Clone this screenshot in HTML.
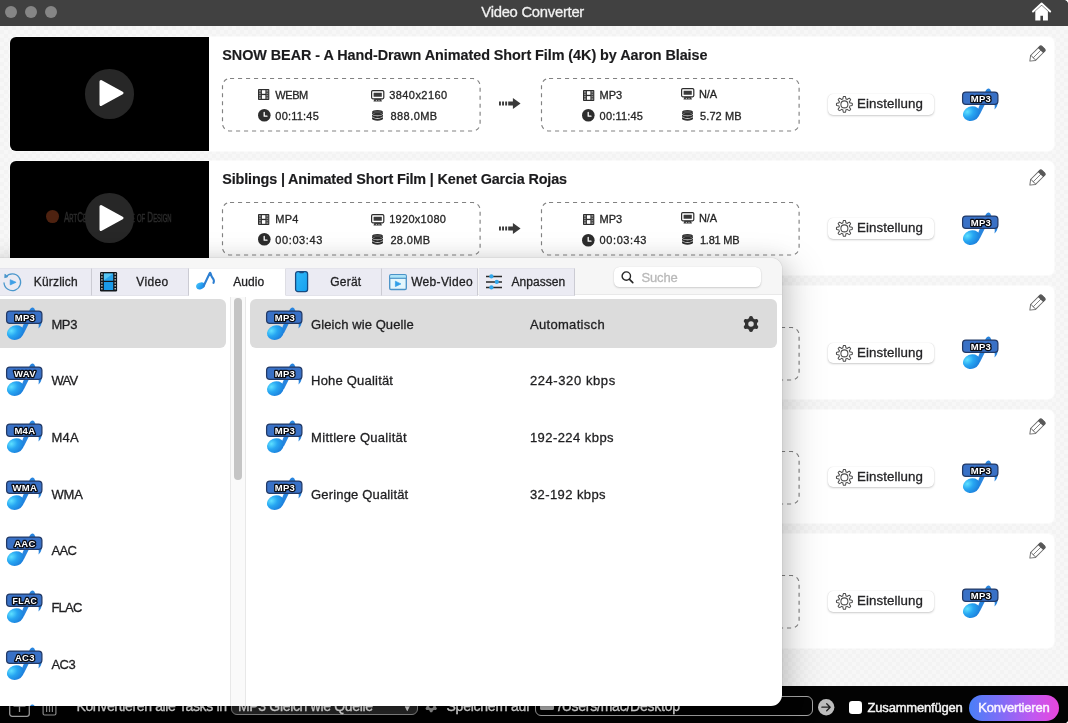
<!DOCTYPE html>
<html lang="de">
<head>
<meta charset="utf-8">
<title>Video Converter</title>
<style>
*{box-sizing:border-box;margin:0;padding:0}
html,body{width:1068px;height:723px;overflow:hidden;background:#f7f7f7}
body{position:relative;font-family:"Liberation Sans",sans-serif;color:#1d1d1f;-webkit-font-smoothing:antialiased}
#w{position:absolute;left:0;top:0;width:1068px;height:723px;will-change:transform}
.t{position:absolute;white-space:nowrap;line-height:1;-webkit-text-stroke:.3px}
svg{position:absolute;overflow:visible}
#tb{position:absolute;left:0;top:0;width:1068px;height:26.300px;background:#414141}
.tl{position:absolute;top:6px;width:12px;height:12px;border-radius:50%;background:#868686}
#main{position:absolute;left:0;top:26.300px;width:1068px;height:660px;background-color:#f7f7f7;
 background-image:linear-gradient(45deg,rgba(0,0,0,.016) 25%,transparent 25%,transparent 75%,rgba(0,0,0,.016) 75%),linear-gradient(45deg,rgba(0,0,0,.016) 25%,transparent 25%,transparent 75%,rgba(0,0,0,.016) 75%);background-size:8px 8px;background-position:0 0,4px 4px}
.card{position:absolute;left:10px;width:1044px;height:113.5px;background:#fff;border-radius:6px;box-shadow:0 0 0 1px rgba(255,255,255,.5)}
.thumb{position:absolute;left:0;top:0;width:199px;height:113.5px;background:#000;border-radius:6px 0 0 6px;overflow:hidden}
.play{position:absolute;left:74.500px;top:32.100px;width:49.800px;height:49.800px;border-radius:50%;background:#272727}

.i{font-size:11px;color:#262626}
.set{position:absolute;left:817.5px;top:57px;width:106.5px;height:20.5px;border-radius:5px;background:#fff;
 box-shadow:0 1px 2.2px rgba(0,0,0,.20),0 0 1px rgba(0,0,0,.14)}
#bot{position:absolute;left:0;top:686px;width:1068px;height:37px;background:#030303}
#pop{position:absolute;left:-12px;top:258.400px;width:794.300px;height:447.400px;background:#fff;border-radius:11px;
 box-shadow:0 0 1px rgba(0,0,0,.35),0 4px 24px rgba(0,0,0,.18),16px 4px 34px rgba(0,0,0,.10)}
#popin{position:absolute;left:0;top:0;width:100%;height:100%;border-radius:11px;overflow:hidden}
.tab{position:absolute;top:10px;height:27px;background:#ebebf3;border-right:1px solid #cbcbd3;border-top:1px solid #e4e4ec;border-bottom:1px solid #e3e3ea}
.tab.on{background:#fff;border-right-color:#dedee4;border-bottom-color:#fff;border-top-color:#f2f2f4}
.lbl{font-size:13px;color:#1f1f21}
</style>
</head>
<body>
<div id="w">
<div id="tb">
<div class="tl" style="left:5px"></div>
<div class="tl" style="left:25px"></div>
<div class="tl" style="left:45px"></div>
<div class="t" style="left:481.30px;top:5.07px;font-size:14.8px;letter-spacing:-0.261px;color:#f1f1f1;">Video Converter</div>
<svg style="left:1031.9px;top:1.9px" width="19.2" height="19" viewBox="0 0 19.2 19" ><path d="M1 9.500 9.600 1.500 18.200 9.500" fill="none" stroke="#fff" stroke-width="1.9" stroke-linecap="round" stroke-linejoin="round"/><path d="M3.300 9.300 9.600 3.600 15.900 9.300V18.500H11V13.800H8.400V18.500H3.300z" fill="#fff"/></svg>
</div>
<div id="main"></div>
<div class="card" style="top:37.00px"><div class="thumb">
<div class="play"></div>
<svg style="left:89.400px;top:42.300px" width="25" height="28" viewBox="0 0 25 28"><path d="M2 2.500 23 14 2 25.500z" fill="#fff" stroke="#fff" stroke-width="3" stroke-linejoin="round"/></svg>
</div></div>
<div class="t" style="left:222.30px;top:47.91px;font-size:14.4px;letter-spacing:-0.056px;color:#1b1b1d;font-weight:bold;-webkit-text-stroke:.15px;">SNOW BEAR - A Hand-Drawn Animated Short Film (4K) by Aaron Blaise</div>
<svg style="left:222.2px;top:78.00px" width="258.6" height="53.5"><rect x=".5" y=".5" width="257.600" height="52.500" rx="7.500" fill="none" stroke="#828282" stroke-width="1.150" stroke-dasharray="4.100 3.900"/></svg>
<svg style="left:540.6px;top:78.00px" width="258.6" height="53.5"><rect x=".5" y=".5" width="257.600" height="52.500" rx="7.500" fill="none" stroke="#828282" stroke-width="1.150" stroke-dasharray="4.100 3.900"/></svg>
<svg style="left:258.4px;top:89.35px" width="11.3" height="11" viewBox="0 0 11.3 11" ><rect x="0" y="0" width="11.300" height="11" rx=".8" fill="#2d2d2d"/><rect x="1" y="1" width="1.900" height="9" fill="#8a8a8a"/><rect x="8.400" y="1" width="1.900" height="9" fill="#8a8a8a"/><path d="M1 3.250H2.900M1 5.500H2.900M1 7.750H2.900M8.400 3.250H10.300M8.400 5.500H10.300M8.400 7.750H10.300" stroke="#2d2d2d" stroke-width=".8"/><rect x="3.900" y="1.200" width="3.500" height="3.600" fill="#fff"/><rect x="3.900" y="6.100" width="3.500" height="3.700" fill="#fff"/></svg>
<div class="t i" style="left:275.30px;top:89.79px;font-size:11px;letter-spacing:-0.411px;">WEBM</div>
<svg style="left:257.9px;top:109.2px" width="12.6" height="12.6" viewBox="0 0 12.6 12.6" ><circle cx="6.300" cy="6.300" r="6.300" fill="#2d2d2d"/><path d="M6.200 3.400V7.200H9" stroke="#fff" stroke-width="1.300" fill="none" stroke-linecap="round" stroke-linejoin="round"/></svg>
<div class="t i" style="left:275.30px;top:110.79px;font-size:11px;letter-spacing:0.212px;">00:11:45</div>
<svg style="left:370.8px;top:89.8px" width="13.4" height="11.6" viewBox="0 0 13.4 11.6" ><rect x=".6" y=".6" width="12.200" height="8.200" rx="1.200" fill="#fff" stroke="#2d2d2d" stroke-width="1.200"/><rect x="2.600" y="2.700" width="8.200" height="4" rx=".3" fill="#3a3a3a"/><path d="M3.400 8.800h6.600l.9 2.700H2.500z" fill="#3a3a3a"/><path d="M5.400 10v.9M8 10v.9" stroke="#f2f2f2" stroke-width=".8"/></svg>
<div class="t i" style="left:389.20px;top:89.79px;font-size:11px;letter-spacing:0.443px;">3840x2160</div>
<svg style="left:371.7px;top:109.9px" width="11" height="10.7" viewBox="0 0 11 10.7" ><ellipse cx="5.500" cy="2" rx="5.500" ry="2" fill="#2d2d2d"/><path d="M0 2v1.5a5.500 2 0 0 0 11 0v-1.5a5.500 2 0 0 1 -11 0zM0 4.2v1.8a5.500 2 0 0 0 11 0v-1.8a5.500 2 0 0 1 -11 0zM0 6.7v2a5.500 2 0 0 0 11 0v-2a5.500 2 0 0 1 -11 0z" fill="#2d2d2d"/><ellipse cx="5.500" cy="1.900" rx="4" ry="1.100" fill="#4a4a4a"/></svg>
<div class="t i" style="left:390.40px;top:110.79px;font-size:11px;letter-spacing:0.461px;">888.0MB</div>
<svg style="left:499px;top:98.4px" width="21.6" height="11.1" viewBox="0 0 21.6 11.1" ><path d="M0 3.600h1.900v3.900H0zM3.100 3.600h1.900v3.900H3.100zM6.200 3.600h1.900v3.900H6.200z" fill="#3a3a3a"/><path d="M9.200 3.600h4.700V0l7.700 5.550-7.700 5.550V7.500H9.200z" fill="#3a3a3a"/></svg>
<svg style="left:583px;top:89.6px" width="11.3" height="11" viewBox="0 0 11.3 11" ><rect x="0" y="0" width="11.300" height="11" rx=".8" fill="#2d2d2d"/><rect x="1" y="1" width="1.900" height="9" fill="#8a8a8a"/><rect x="8.400" y="1" width="1.900" height="9" fill="#8a8a8a"/><path d="M1 3.250H2.900M1 5.500H2.900M1 7.750H2.900M8.400 3.250H10.300M8.400 5.500H10.300M8.400 7.750H10.300" stroke="#2d2d2d" stroke-width=".8"/><rect x="3.900" y="1.200" width="3.500" height="3.600" fill="#fff"/><rect x="3.900" y="6.100" width="3.500" height="3.700" fill="#fff"/></svg>
<div class="t i" style="left:599.60px;top:89.79px;font-size:11px;letter-spacing:-0.012px;">MP3</div>
<svg style="left:582.2px;top:109.3px" width="12.6" height="12.6" viewBox="0 0 12.6 12.6" ><circle cx="6.300" cy="6.300" r="6.300" fill="#2d2d2d"/><path d="M6.200 3.400V7.200H9" stroke="#fff" stroke-width="1.300" fill="none" stroke-linecap="round" stroke-linejoin="round"/></svg>
<div class="t i" style="left:599.60px;top:110.79px;font-size:11px;letter-spacing:0.198px;">00:11:45</div>
<svg style="left:681.2px;top:88.0px" width="13.4" height="11.6" viewBox="0 0 13.4 11.6" ><rect x=".6" y=".6" width="12.200" height="8.200" rx="1.200" fill="#fff" stroke="#2d2d2d" stroke-width="1.200"/><rect x="2.600" y="2.700" width="8.200" height="4" rx=".3" fill="#3a3a3a"/><path d="M3.400 8.800h6.600l.9 2.700H2.500z" fill="#3a3a3a"/><path d="M5.400 10v.9M8 10v.9" stroke="#f2f2f2" stroke-width=".8"/></svg>
<div class="t i" style="left:699.00px;top:88.59px;font-size:11px;letter-spacing:-0.172px;">N/A</div>
<svg style="left:682px;top:109.9px" width="11" height="10.7" viewBox="0 0 11 10.7" ><ellipse cx="5.500" cy="2" rx="5.500" ry="2" fill="#2d2d2d"/><path d="M0 2v1.5a5.500 2 0 0 0 11 0v-1.5a5.500 2 0 0 1 -11 0zM0 4.2v1.8a5.500 2 0 0 0 11 0v-1.8a5.500 2 0 0 1 -11 0zM0 6.7v2a5.500 2 0 0 0 11 0v-2a5.500 2 0 0 1 -11 0z" fill="#2d2d2d"/><ellipse cx="5.500" cy="1.900" rx="4" ry="1.100" fill="#4a4a4a"/></svg>
<div class="t i" style="left:700.00px;top:110.79px;font-size:11px;letter-spacing:0.105px;">5.72 MB</div>
<div class="set" style="left:827.6px;top:94.10px"></div>
<svg style="left:836.1px;top:96.0px" width="16.8" height="16.8" viewBox="0 0 16.8 16.8" ><path d="M8.40 0.45L8.71 0.46L9.02 0.47L9.33 0.51L9.56 1.09L9.73 1.73L9.85 2.38L9.93 2.96L10.15 3.03L10.36 3.10L10.56 3.18L10.77 3.27L10.97 3.37L11.16 3.47L11.64 3.12L12.18 2.75L12.75 2.41L13.32 2.16L13.56 2.35L13.80 2.56L14.02 2.78L14.24 3.00L14.45 3.24L14.64 3.48L14.39 4.05L14.05 4.62L13.68 5.16L13.33 5.64L13.43 5.83L13.53 6.03L13.62 6.24L13.70 6.44L13.77 6.65L13.84 6.87L14.42 6.95L15.07 7.07L15.71 7.24L16.29 7.47L16.33 7.78L16.34 8.09L16.35 8.40L16.34 8.71L16.33 9.02L16.29 9.33L15.71 9.56L15.07 9.73L14.42 9.85L13.84 9.93L13.77 10.15L13.70 10.36L13.62 10.56L13.53 10.77L13.43 10.97L13.33 11.16L13.68 11.64L14.05 12.18L14.39 12.75L14.64 13.32L14.45 13.56L14.24 13.80L14.02 14.02L13.80 14.24L13.56 14.45L13.32 14.64L12.75 14.39L12.18 14.05L11.64 13.68L11.16 13.33L10.97 13.43L10.77 13.53L10.56 13.62L10.36 13.70L10.15 13.77L9.93 13.84L9.85 14.42L9.73 15.07L9.56 15.71L9.33 16.29L9.02 16.33L8.71 16.34L8.40 16.35L8.09 16.34L7.78 16.33L7.47 16.29L7.24 15.71L7.07 15.07L6.95 14.42L6.87 13.84L6.65 13.77L6.44 13.70L6.24 13.62L6.03 13.53L5.83 13.43L5.64 13.33L5.16 13.68L4.62 14.05L4.05 14.39L3.48 14.64L3.24 14.45L3.00 14.24L2.78 14.02L2.56 13.80L2.35 13.56L2.16 13.32L2.41 12.75L2.75 12.18L3.12 11.64L3.47 11.16L3.37 10.97L3.27 10.77L3.18 10.56L3.10 10.36L3.03 10.15L2.96 9.93L2.38 9.85L1.73 9.73L1.09 9.56L0.51 9.33L0.47 9.02L0.46 8.71L0.45 8.40L0.46 8.09L0.47 7.78L0.51 7.47L1.09 7.24L1.73 7.07L2.38 6.95L2.96 6.87L3.03 6.65L3.10 6.44L3.18 6.24L3.27 6.03L3.37 5.83L3.47 5.64L3.12 5.16L2.75 4.62L2.41 4.05L2.16 3.48L2.35 3.24L2.56 3.00L2.78 2.78L3.00 2.56L3.24 2.35L3.48 2.16L4.05 2.41L4.62 2.75L5.16 3.12L5.64 3.47L5.83 3.37L6.03 3.27L6.24 3.18L6.44 3.10L6.65 3.03L6.87 2.96L6.95 2.38L7.07 1.73L7.24 1.09L7.47 0.51L7.78 0.47L8.09 0.46Z" fill="none" stroke="#4c4c4c" stroke-width="1.050" stroke-linejoin="round"/><circle cx="8.400" cy="8.400" r="3.500" fill="none" stroke="#4c4c4c" stroke-width="1.050"/></svg>
<div class="t" style="left:857.00px;top:97.04px;font-size:13.3px;letter-spacing:0.094px;color:#252527;">Einstellung</div>
<svg style="left:959.75px;top:86.65px" width="40" height="36" viewBox="0 0 40 36" ><defs><radialGradient id="ng1" cx=".32" cy=".28" r=".8"><stop offset="0" stop-color="#5ee0ff"/><stop offset=".45" stop-color="#27a6f2"/><stop offset="1" stop-color="#1b7cda"/></radialGradient></defs><path d="M25.900 3.200Q28.100 .3 30.500 2.700C31 6.500 37.600 9 37.700 15C37.700 19 36.200 21 34.400 22.500C35 20 35.200 17.500 33 15.200C31 13 29 12.500 27.600 12L19.800 27.500 16.800 25z" fill="#2985de"/><ellipse cx="11.400" cy="26.600" rx="8.600" ry="7.200" transform="rotate(-22 11.400 26.600)" fill="url(#ng1)"/><rect x="2.600" y="5" width="35.300" height="12.400" rx="3.300" fill="#3971c6" stroke="#233a66" stroke-width="1.250"/><text x="20.900" y="14.850" text-anchor="middle" font-family="Liberation Sans,sans-serif" font-weight="bold" font-size="9.5" fill="#fff" stroke="#0b0e16" stroke-width="2.700" stroke-linejoin="round" paint-order="stroke" letter-spacing="0.3">MP3</text></svg>
<svg style="left:1029.3px;top:45.2px" width="17" height="17" viewBox="0 0 17 17" ><g transform="rotate(45 8.500 8.500)"><path d="M5 3.600h7v11.200L8.500 19.300 5 14.800z" fill="#fff" stroke="#6a6a6a" stroke-width=".95" stroke-linejoin="round"/><path d="M5 14.800Q6.700 13.600 8.500 14.800Q10.300 13.600 12 14.800M8.500 3.600v11.200" stroke="#6a6a6a" stroke-width=".8" fill="none"/><path d="M5 3.600V1.600Q5 .2 6.500 .2H10.500Q12 .2 12 1.600V3.600z" fill="#585858" stroke="#585858" stroke-width=".95" stroke-linejoin="round"/></g></svg>
<div class="card" style="top:161.26px"><div class="thumb">
<div style="position:absolute;left:36px;top:48.400px;width:13.400px;height:13.200px;border-radius:50%;background:#4e2210;filter:blur(.4px)"></div>
<div class="t" style="left:54.300px;top:47.800px;font-size:15px;color:#2b2b2b;-webkit-text-stroke:.5px;transform:scaleX(.537);transform-origin:0 0;font-variant:small-caps">ArtCenter College of Design</div>
<div class="play"></div>
<svg style="left:89.400px;top:42.300px" width="25" height="28" viewBox="0 0 25 28"><path d="M2 2.500 23 14 2 25.500z" fill="#fff" stroke="#fff" stroke-width="3" stroke-linejoin="round"/></svg>
</div></div>
<div class="t" style="left:222.30px;top:172.17px;font-size:14.4px;letter-spacing:-0.149px;color:#1b1b1d;font-weight:bold;-webkit-text-stroke:.15px;">Siblings | Animated Short Film | Kenet Garcia Rojas</div>
<svg style="left:222.2px;top:202.26px" width="258.6" height="53.5"><rect x=".5" y=".5" width="257.600" height="52.500" rx="7.500" fill="none" stroke="#828282" stroke-width="1.150" stroke-dasharray="4.100 3.900"/></svg>
<svg style="left:540.6px;top:202.26px" width="258.6" height="53.5"><rect x=".5" y=".5" width="257.600" height="52.500" rx="7.500" fill="none" stroke="#828282" stroke-width="1.150" stroke-dasharray="4.100 3.900"/></svg>
<svg style="left:258.4px;top:213.60999999999999px" width="11.3" height="11" viewBox="0 0 11.3 11" ><rect x="0" y="0" width="11.300" height="11" rx=".8" fill="#2d2d2d"/><rect x="1" y="1" width="1.900" height="9" fill="#8a8a8a"/><rect x="8.400" y="1" width="1.900" height="9" fill="#8a8a8a"/><path d="M1 3.250H2.900M1 5.500H2.900M1 7.750H2.900M8.400 3.250H10.300M8.400 5.500H10.300M8.400 7.750H10.300" stroke="#2d2d2d" stroke-width=".8"/><rect x="3.900" y="1.200" width="3.500" height="3.600" fill="#fff"/><rect x="3.900" y="6.100" width="3.500" height="3.700" fill="#fff"/></svg>
<div class="t i" style="left:275.30px;top:214.05px;font-size:11px;letter-spacing:0.287px;">MP4</div>
<svg style="left:257.9px;top:233.45999999999998px" width="12.6" height="12.6" viewBox="0 0 12.6 12.6" ><circle cx="6.300" cy="6.300" r="6.300" fill="#2d2d2d"/><path d="M6.200 3.400V7.200H9" stroke="#fff" stroke-width="1.300" fill="none" stroke-linecap="round" stroke-linejoin="round"/></svg>
<div class="t i" style="left:275.30px;top:235.05px;font-size:11px;letter-spacing:0.596px;">00:03:43</div>
<svg style="left:370.8px;top:214.06px" width="13.4" height="11.6" viewBox="0 0 13.4 11.6" ><rect x=".6" y=".6" width="12.200" height="8.200" rx="1.200" fill="#fff" stroke="#2d2d2d" stroke-width="1.200"/><rect x="2.600" y="2.700" width="8.200" height="4" rx=".3" fill="#3a3a3a"/><path d="M3.400 8.800h6.600l.9 2.700H2.500z" fill="#3a3a3a"/><path d="M5.400 10v.9M8 10v.9" stroke="#f2f2f2" stroke-width=".8"/></svg>
<div class="t i" style="left:389.20px;top:214.05px;font-size:11px;letter-spacing:0.293px;">1920x1080</div>
<svg style="left:371.7px;top:234.16px" width="11" height="10.7" viewBox="0 0 11 10.7" ><ellipse cx="5.500" cy="2" rx="5.500" ry="2" fill="#2d2d2d"/><path d="M0 2v1.5a5.500 2 0 0 0 11 0v-1.5a5.500 2 0 0 1 -11 0zM0 4.2v1.8a5.500 2 0 0 0 11 0v-1.8a5.500 2 0 0 1 -11 0zM0 6.7v2a5.500 2 0 0 0 11 0v-2a5.500 2 0 0 1 -11 0z" fill="#2d2d2d"/><ellipse cx="5.500" cy="1.900" rx="4" ry="1.100" fill="#4a4a4a"/></svg>
<div class="t i" style="left:390.40px;top:235.05px;font-size:11px;letter-spacing:0.336px;">28.0MB</div>
<svg style="left:499px;top:222.66px" width="21.6" height="11.1" viewBox="0 0 21.6 11.1" ><path d="M0 3.600h1.900v3.900H0zM3.100 3.600h1.900v3.900H3.100zM6.200 3.600h1.900v3.900H6.200z" fill="#3a3a3a"/><path d="M9.200 3.600h4.700V0l7.700 5.550-7.700 5.550V7.500H9.200z" fill="#3a3a3a"/></svg>
<svg style="left:583px;top:213.85999999999999px" width="11.3" height="11" viewBox="0 0 11.3 11" ><rect x="0" y="0" width="11.300" height="11" rx=".8" fill="#2d2d2d"/><rect x="1" y="1" width="1.900" height="9" fill="#8a8a8a"/><rect x="8.400" y="1" width="1.900" height="9" fill="#8a8a8a"/><path d="M1 3.250H2.900M1 5.500H2.900M1 7.750H2.900M8.400 3.250H10.300M8.400 5.500H10.300M8.400 7.750H10.300" stroke="#2d2d2d" stroke-width=".8"/><rect x="3.900" y="1.200" width="3.500" height="3.600" fill="#fff"/><rect x="3.900" y="6.100" width="3.500" height="3.700" fill="#fff"/></svg>
<div class="t i" style="left:599.60px;top:214.05px;font-size:11px;letter-spacing:-0.012px;">MP3</div>
<svg style="left:582.2px;top:233.56px" width="12.6" height="12.6" viewBox="0 0 12.6 12.6" ><circle cx="6.300" cy="6.300" r="6.300" fill="#2d2d2d"/><path d="M6.200 3.400V7.200H9" stroke="#fff" stroke-width="1.300" fill="none" stroke-linecap="round" stroke-linejoin="round"/></svg>
<div class="t i" style="left:599.60px;top:235.05px;font-size:11px;letter-spacing:0.582px;">00:03:43</div>
<svg style="left:681.2px;top:212.26px" width="13.4" height="11.6" viewBox="0 0 13.4 11.6" ><rect x=".6" y=".6" width="12.200" height="8.200" rx="1.200" fill="#fff" stroke="#2d2d2d" stroke-width="1.200"/><rect x="2.600" y="2.700" width="8.200" height="4" rx=".3" fill="#3a3a3a"/><path d="M3.400 8.800h6.600l.9 2.700H2.500z" fill="#3a3a3a"/><path d="M5.400 10v.9M8 10v.9" stroke="#f2f2f2" stroke-width=".8"/></svg>
<div class="t i" style="left:699.00px;top:212.85px;font-size:11px;letter-spacing:-0.172px;">N/A</div>
<svg style="left:682px;top:234.16px" width="11" height="10.7" viewBox="0 0 11 10.7" ><ellipse cx="5.500" cy="2" rx="5.500" ry="2" fill="#2d2d2d"/><path d="M0 2v1.5a5.500 2 0 0 0 11 0v-1.5a5.500 2 0 0 1 -11 0zM0 4.2v1.8a5.500 2 0 0 0 11 0v-1.8a5.500 2 0 0 1 -11 0zM0 6.7v2a5.500 2 0 0 0 11 0v-2a5.500 2 0 0 1 -11 0z" fill="#2d2d2d"/><ellipse cx="5.500" cy="1.900" rx="4" ry="1.100" fill="#4a4a4a"/></svg>
<div class="t i" style="left:700.00px;top:235.05px;font-size:11px;letter-spacing:-0.245px;">1.81 MB</div>
<div class="set" style="left:827.6px;top:218.36px"></div>
<svg style="left:836.1px;top:220.26px" width="16.8" height="16.8" viewBox="0 0 16.8 16.8" ><path d="M8.40 0.45L8.71 0.46L9.02 0.47L9.33 0.51L9.56 1.09L9.73 1.73L9.85 2.38L9.93 2.96L10.15 3.03L10.36 3.10L10.56 3.18L10.77 3.27L10.97 3.37L11.16 3.47L11.64 3.12L12.18 2.75L12.75 2.41L13.32 2.16L13.56 2.35L13.80 2.56L14.02 2.78L14.24 3.00L14.45 3.24L14.64 3.48L14.39 4.05L14.05 4.62L13.68 5.16L13.33 5.64L13.43 5.83L13.53 6.03L13.62 6.24L13.70 6.44L13.77 6.65L13.84 6.87L14.42 6.95L15.07 7.07L15.71 7.24L16.29 7.47L16.33 7.78L16.34 8.09L16.35 8.40L16.34 8.71L16.33 9.02L16.29 9.33L15.71 9.56L15.07 9.73L14.42 9.85L13.84 9.93L13.77 10.15L13.70 10.36L13.62 10.56L13.53 10.77L13.43 10.97L13.33 11.16L13.68 11.64L14.05 12.18L14.39 12.75L14.64 13.32L14.45 13.56L14.24 13.80L14.02 14.02L13.80 14.24L13.56 14.45L13.32 14.64L12.75 14.39L12.18 14.05L11.64 13.68L11.16 13.33L10.97 13.43L10.77 13.53L10.56 13.62L10.36 13.70L10.15 13.77L9.93 13.84L9.85 14.42L9.73 15.07L9.56 15.71L9.33 16.29L9.02 16.33L8.71 16.34L8.40 16.35L8.09 16.34L7.78 16.33L7.47 16.29L7.24 15.71L7.07 15.07L6.95 14.42L6.87 13.84L6.65 13.77L6.44 13.70L6.24 13.62L6.03 13.53L5.83 13.43L5.64 13.33L5.16 13.68L4.62 14.05L4.05 14.39L3.48 14.64L3.24 14.45L3.00 14.24L2.78 14.02L2.56 13.80L2.35 13.56L2.16 13.32L2.41 12.75L2.75 12.18L3.12 11.64L3.47 11.16L3.37 10.97L3.27 10.77L3.18 10.56L3.10 10.36L3.03 10.15L2.96 9.93L2.38 9.85L1.73 9.73L1.09 9.56L0.51 9.33L0.47 9.02L0.46 8.71L0.45 8.40L0.46 8.09L0.47 7.78L0.51 7.47L1.09 7.24L1.73 7.07L2.38 6.95L2.96 6.87L3.03 6.65L3.10 6.44L3.18 6.24L3.27 6.03L3.37 5.83L3.47 5.64L3.12 5.16L2.75 4.62L2.41 4.05L2.16 3.48L2.35 3.24L2.56 3.00L2.78 2.78L3.00 2.56L3.24 2.35L3.48 2.16L4.05 2.41L4.62 2.75L5.16 3.12L5.64 3.47L5.83 3.37L6.03 3.27L6.24 3.18L6.44 3.10L6.65 3.03L6.87 2.96L6.95 2.38L7.07 1.73L7.24 1.09L7.47 0.51L7.78 0.47L8.09 0.46Z" fill="none" stroke="#4c4c4c" stroke-width="1.050" stroke-linejoin="round"/><circle cx="8.400" cy="8.400" r="3.500" fill="none" stroke="#4c4c4c" stroke-width="1.050"/></svg>
<div class="t" style="left:857.00px;top:221.30px;font-size:13.3px;letter-spacing:0.094px;color:#252527;">Einstellung</div>
<svg style="left:959.75px;top:210.91px" width="40" height="36" viewBox="0 0 40 36" ><defs><radialGradient id="ng2" cx=".32" cy=".28" r=".8"><stop offset="0" stop-color="#5ee0ff"/><stop offset=".45" stop-color="#27a6f2"/><stop offset="1" stop-color="#1b7cda"/></radialGradient></defs><path d="M25.900 3.200Q28.100 .3 30.500 2.700C31 6.500 37.600 9 37.700 15C37.700 19 36.200 21 34.400 22.500C35 20 35.200 17.500 33 15.200C31 13 29 12.500 27.600 12L19.800 27.500 16.800 25z" fill="#2985de"/><ellipse cx="11.400" cy="26.600" rx="8.600" ry="7.200" transform="rotate(-22 11.400 26.600)" fill="url(#ng2)"/><rect x="2.600" y="5" width="35.300" height="12.400" rx="3.300" fill="#3971c6" stroke="#233a66" stroke-width="1.250"/><text x="20.900" y="14.850" text-anchor="middle" font-family="Liberation Sans,sans-serif" font-weight="bold" font-size="9.5" fill="#fff" stroke="#0b0e16" stroke-width="2.700" stroke-linejoin="round" paint-order="stroke" letter-spacing="0.3">MP3</text></svg>
<svg style="left:1029.3px;top:169.45999999999998px" width="17" height="17" viewBox="0 0 17 17" ><g transform="rotate(45 8.500 8.500)"><path d="M5 3.600h7v11.200L8.500 19.300 5 14.800z" fill="#fff" stroke="#6a6a6a" stroke-width=".95" stroke-linejoin="round"/><path d="M5 14.800Q6.700 13.600 8.500 14.800Q10.300 13.600 12 14.800M8.500 3.600v11.200" stroke="#6a6a6a" stroke-width=".8" fill="none"/><path d="M5 3.600V1.600Q5 .2 6.500 .2H10.500Q12 .2 12 1.600V3.600z" fill="#585858" stroke="#585858" stroke-width=".95" stroke-linejoin="round"/></g></svg>
<div class="card" style="top:285.52px"><div class="thumb">
<div class="play"></div>
<svg style="left:89.400px;top:42.300px" width="25" height="28" viewBox="0 0 25 28"><path d="M2 2.500 23 14 2 25.500z" fill="#fff" stroke="#fff" stroke-width="3" stroke-linejoin="round"/></svg>
</div></div>
<svg style="left:540.6px;top:326.52px" width="258.6" height="53.5"><rect x=".5" y=".5" width="257.600" height="52.500" rx="7.500" fill="none" stroke="#828282" stroke-width="1.150" stroke-dasharray="4.100 3.900"/></svg>
<div class="set" style="left:827.6px;top:342.62px"></div>
<svg style="left:836.1px;top:344.52px" width="16.8" height="16.8" viewBox="0 0 16.8 16.8" ><path d="M8.40 0.45L8.71 0.46L9.02 0.47L9.33 0.51L9.56 1.09L9.73 1.73L9.85 2.38L9.93 2.96L10.15 3.03L10.36 3.10L10.56 3.18L10.77 3.27L10.97 3.37L11.16 3.47L11.64 3.12L12.18 2.75L12.75 2.41L13.32 2.16L13.56 2.35L13.80 2.56L14.02 2.78L14.24 3.00L14.45 3.24L14.64 3.48L14.39 4.05L14.05 4.62L13.68 5.16L13.33 5.64L13.43 5.83L13.53 6.03L13.62 6.24L13.70 6.44L13.77 6.65L13.84 6.87L14.42 6.95L15.07 7.07L15.71 7.24L16.29 7.47L16.33 7.78L16.34 8.09L16.35 8.40L16.34 8.71L16.33 9.02L16.29 9.33L15.71 9.56L15.07 9.73L14.42 9.85L13.84 9.93L13.77 10.15L13.70 10.36L13.62 10.56L13.53 10.77L13.43 10.97L13.33 11.16L13.68 11.64L14.05 12.18L14.39 12.75L14.64 13.32L14.45 13.56L14.24 13.80L14.02 14.02L13.80 14.24L13.56 14.45L13.32 14.64L12.75 14.39L12.18 14.05L11.64 13.68L11.16 13.33L10.97 13.43L10.77 13.53L10.56 13.62L10.36 13.70L10.15 13.77L9.93 13.84L9.85 14.42L9.73 15.07L9.56 15.71L9.33 16.29L9.02 16.33L8.71 16.34L8.40 16.35L8.09 16.34L7.78 16.33L7.47 16.29L7.24 15.71L7.07 15.07L6.95 14.42L6.87 13.84L6.65 13.77L6.44 13.70L6.24 13.62L6.03 13.53L5.83 13.43L5.64 13.33L5.16 13.68L4.62 14.05L4.05 14.39L3.48 14.64L3.24 14.45L3.00 14.24L2.78 14.02L2.56 13.80L2.35 13.56L2.16 13.32L2.41 12.75L2.75 12.18L3.12 11.64L3.47 11.16L3.37 10.97L3.27 10.77L3.18 10.56L3.10 10.36L3.03 10.15L2.96 9.93L2.38 9.85L1.73 9.73L1.09 9.56L0.51 9.33L0.47 9.02L0.46 8.71L0.45 8.40L0.46 8.09L0.47 7.78L0.51 7.47L1.09 7.24L1.73 7.07L2.38 6.95L2.96 6.87L3.03 6.65L3.10 6.44L3.18 6.24L3.27 6.03L3.37 5.83L3.47 5.64L3.12 5.16L2.75 4.62L2.41 4.05L2.16 3.48L2.35 3.24L2.56 3.00L2.78 2.78L3.00 2.56L3.24 2.35L3.48 2.16L4.05 2.41L4.62 2.75L5.16 3.12L5.64 3.47L5.83 3.37L6.03 3.27L6.24 3.18L6.44 3.10L6.65 3.03L6.87 2.96L6.95 2.38L7.07 1.73L7.24 1.09L7.47 0.51L7.78 0.47L8.09 0.46Z" fill="none" stroke="#4c4c4c" stroke-width="1.050" stroke-linejoin="round"/><circle cx="8.400" cy="8.400" r="3.500" fill="none" stroke="#4c4c4c" stroke-width="1.050"/></svg>
<div class="t" style="left:857.00px;top:345.56px;font-size:13.3px;letter-spacing:0.094px;color:#252527;">Einstellung</div>
<svg style="left:959.75px;top:335.16999999999996px" width="40" height="36" viewBox="0 0 40 36" ><defs><radialGradient id="ng3" cx=".32" cy=".28" r=".8"><stop offset="0" stop-color="#5ee0ff"/><stop offset=".45" stop-color="#27a6f2"/><stop offset="1" stop-color="#1b7cda"/></radialGradient></defs><path d="M25.900 3.200Q28.100 .3 30.500 2.700C31 6.500 37.600 9 37.700 15C37.700 19 36.200 21 34.400 22.500C35 20 35.200 17.500 33 15.200C31 13 29 12.500 27.600 12L19.800 27.500 16.800 25z" fill="#2985de"/><ellipse cx="11.400" cy="26.600" rx="8.600" ry="7.200" transform="rotate(-22 11.400 26.600)" fill="url(#ng3)"/><rect x="2.600" y="5" width="35.300" height="12.400" rx="3.300" fill="#3971c6" stroke="#233a66" stroke-width="1.250"/><text x="20.900" y="14.850" text-anchor="middle" font-family="Liberation Sans,sans-serif" font-weight="bold" font-size="9.5" fill="#fff" stroke="#0b0e16" stroke-width="2.700" stroke-linejoin="round" paint-order="stroke" letter-spacing="0.3">MP3</text></svg>
<svg style="left:1029.3px;top:293.71999999999997px" width="17" height="17" viewBox="0 0 17 17" ><g transform="rotate(45 8.500 8.500)"><path d="M5 3.600h7v11.200L8.500 19.300 5 14.800z" fill="#fff" stroke="#6a6a6a" stroke-width=".95" stroke-linejoin="round"/><path d="M5 14.800Q6.700 13.600 8.500 14.800Q10.300 13.600 12 14.800M8.500 3.600v11.200" stroke="#6a6a6a" stroke-width=".8" fill="none"/><path d="M5 3.600V1.600Q5 .2 6.500 .2H10.500Q12 .2 12 1.600V3.600z" fill="#585858" stroke="#585858" stroke-width=".95" stroke-linejoin="round"/></g></svg>
<div class="card" style="top:409.78px"><div class="thumb">
<div class="play"></div>
<svg style="left:89.400px;top:42.300px" width="25" height="28" viewBox="0 0 25 28"><path d="M2 2.500 23 14 2 25.500z" fill="#fff" stroke="#fff" stroke-width="3" stroke-linejoin="round"/></svg>
</div></div>
<svg style="left:540.6px;top:450.78px" width="258.6" height="53.5"><rect x=".5" y=".5" width="257.600" height="52.500" rx="7.500" fill="none" stroke="#828282" stroke-width="1.150" stroke-dasharray="4.100 3.900"/></svg>
<div class="set" style="left:827.6px;top:466.88px"></div>
<svg style="left:836.1px;top:468.78000000000003px" width="16.8" height="16.8" viewBox="0 0 16.8 16.8" ><path d="M8.40 0.45L8.71 0.46L9.02 0.47L9.33 0.51L9.56 1.09L9.73 1.73L9.85 2.38L9.93 2.96L10.15 3.03L10.36 3.10L10.56 3.18L10.77 3.27L10.97 3.37L11.16 3.47L11.64 3.12L12.18 2.75L12.75 2.41L13.32 2.16L13.56 2.35L13.80 2.56L14.02 2.78L14.24 3.00L14.45 3.24L14.64 3.48L14.39 4.05L14.05 4.62L13.68 5.16L13.33 5.64L13.43 5.83L13.53 6.03L13.62 6.24L13.70 6.44L13.77 6.65L13.84 6.87L14.42 6.95L15.07 7.07L15.71 7.24L16.29 7.47L16.33 7.78L16.34 8.09L16.35 8.40L16.34 8.71L16.33 9.02L16.29 9.33L15.71 9.56L15.07 9.73L14.42 9.85L13.84 9.93L13.77 10.15L13.70 10.36L13.62 10.56L13.53 10.77L13.43 10.97L13.33 11.16L13.68 11.64L14.05 12.18L14.39 12.75L14.64 13.32L14.45 13.56L14.24 13.80L14.02 14.02L13.80 14.24L13.56 14.45L13.32 14.64L12.75 14.39L12.18 14.05L11.64 13.68L11.16 13.33L10.97 13.43L10.77 13.53L10.56 13.62L10.36 13.70L10.15 13.77L9.93 13.84L9.85 14.42L9.73 15.07L9.56 15.71L9.33 16.29L9.02 16.33L8.71 16.34L8.40 16.35L8.09 16.34L7.78 16.33L7.47 16.29L7.24 15.71L7.07 15.07L6.95 14.42L6.87 13.84L6.65 13.77L6.44 13.70L6.24 13.62L6.03 13.53L5.83 13.43L5.64 13.33L5.16 13.68L4.62 14.05L4.05 14.39L3.48 14.64L3.24 14.45L3.00 14.24L2.78 14.02L2.56 13.80L2.35 13.56L2.16 13.32L2.41 12.75L2.75 12.18L3.12 11.64L3.47 11.16L3.37 10.97L3.27 10.77L3.18 10.56L3.10 10.36L3.03 10.15L2.96 9.93L2.38 9.85L1.73 9.73L1.09 9.56L0.51 9.33L0.47 9.02L0.46 8.71L0.45 8.40L0.46 8.09L0.47 7.78L0.51 7.47L1.09 7.24L1.73 7.07L2.38 6.95L2.96 6.87L3.03 6.65L3.10 6.44L3.18 6.24L3.27 6.03L3.37 5.83L3.47 5.64L3.12 5.16L2.75 4.62L2.41 4.05L2.16 3.48L2.35 3.24L2.56 3.00L2.78 2.78L3.00 2.56L3.24 2.35L3.48 2.16L4.05 2.41L4.62 2.75L5.16 3.12L5.64 3.47L5.83 3.37L6.03 3.27L6.24 3.18L6.44 3.10L6.65 3.03L6.87 2.96L6.95 2.38L7.07 1.73L7.24 1.09L7.47 0.51L7.78 0.47L8.09 0.46Z" fill="none" stroke="#4c4c4c" stroke-width="1.050" stroke-linejoin="round"/><circle cx="8.400" cy="8.400" r="3.500" fill="none" stroke="#4c4c4c" stroke-width="1.050"/></svg>
<div class="t" style="left:857.00px;top:469.82px;font-size:13.3px;letter-spacing:0.094px;color:#252527;">Einstellung</div>
<svg style="left:959.75px;top:459.43px" width="40" height="36" viewBox="0 0 40 36" ><defs><radialGradient id="ng4" cx=".32" cy=".28" r=".8"><stop offset="0" stop-color="#5ee0ff"/><stop offset=".45" stop-color="#27a6f2"/><stop offset="1" stop-color="#1b7cda"/></radialGradient></defs><path d="M25.900 3.200Q28.100 .3 30.500 2.700C31 6.500 37.600 9 37.700 15C37.700 19 36.200 21 34.400 22.500C35 20 35.200 17.500 33 15.200C31 13 29 12.500 27.600 12L19.800 27.500 16.800 25z" fill="#2985de"/><ellipse cx="11.400" cy="26.600" rx="8.600" ry="7.200" transform="rotate(-22 11.400 26.600)" fill="url(#ng4)"/><rect x="2.600" y="5" width="35.300" height="12.400" rx="3.300" fill="#3971c6" stroke="#233a66" stroke-width="1.250"/><text x="20.900" y="14.850" text-anchor="middle" font-family="Liberation Sans,sans-serif" font-weight="bold" font-size="9.5" fill="#fff" stroke="#0b0e16" stroke-width="2.700" stroke-linejoin="round" paint-order="stroke" letter-spacing="0.3">MP3</text></svg>
<svg style="left:1029.3px;top:417.98px" width="17" height="17" viewBox="0 0 17 17" ><g transform="rotate(45 8.500 8.500)"><path d="M5 3.600h7v11.200L8.500 19.300 5 14.800z" fill="#fff" stroke="#6a6a6a" stroke-width=".95" stroke-linejoin="round"/><path d="M5 14.800Q6.700 13.600 8.500 14.800Q10.300 13.600 12 14.800M8.500 3.600v11.200" stroke="#6a6a6a" stroke-width=".8" fill="none"/><path d="M5 3.600V1.600Q5 .2 6.500 .2H10.500Q12 .2 12 1.600V3.600z" fill="#585858" stroke="#585858" stroke-width=".95" stroke-linejoin="round"/></g></svg>
<div class="card" style="top:534.04px"><div class="thumb">
<div class="play"></div>
<svg style="left:89.400px;top:42.300px" width="25" height="28" viewBox="0 0 25 28"><path d="M2 2.500 23 14 2 25.500z" fill="#fff" stroke="#fff" stroke-width="3" stroke-linejoin="round"/></svg>
</div></div>
<svg style="left:540.6px;top:575.04px" width="258.6" height="53.5"><rect x=".5" y=".5" width="257.600" height="52.500" rx="7.500" fill="none" stroke="#828282" stroke-width="1.150" stroke-dasharray="4.100 3.900"/></svg>
<div class="set" style="left:827.6px;top:591.14px"></div>
<svg style="left:836.1px;top:593.04px" width="16.8" height="16.8" viewBox="0 0 16.8 16.8" ><path d="M8.40 0.45L8.71 0.46L9.02 0.47L9.33 0.51L9.56 1.09L9.73 1.73L9.85 2.38L9.93 2.96L10.15 3.03L10.36 3.10L10.56 3.18L10.77 3.27L10.97 3.37L11.16 3.47L11.64 3.12L12.18 2.75L12.75 2.41L13.32 2.16L13.56 2.35L13.80 2.56L14.02 2.78L14.24 3.00L14.45 3.24L14.64 3.48L14.39 4.05L14.05 4.62L13.68 5.16L13.33 5.64L13.43 5.83L13.53 6.03L13.62 6.24L13.70 6.44L13.77 6.65L13.84 6.87L14.42 6.95L15.07 7.07L15.71 7.24L16.29 7.47L16.33 7.78L16.34 8.09L16.35 8.40L16.34 8.71L16.33 9.02L16.29 9.33L15.71 9.56L15.07 9.73L14.42 9.85L13.84 9.93L13.77 10.15L13.70 10.36L13.62 10.56L13.53 10.77L13.43 10.97L13.33 11.16L13.68 11.64L14.05 12.18L14.39 12.75L14.64 13.32L14.45 13.56L14.24 13.80L14.02 14.02L13.80 14.24L13.56 14.45L13.32 14.64L12.75 14.39L12.18 14.05L11.64 13.68L11.16 13.33L10.97 13.43L10.77 13.53L10.56 13.62L10.36 13.70L10.15 13.77L9.93 13.84L9.85 14.42L9.73 15.07L9.56 15.71L9.33 16.29L9.02 16.33L8.71 16.34L8.40 16.35L8.09 16.34L7.78 16.33L7.47 16.29L7.24 15.71L7.07 15.07L6.95 14.42L6.87 13.84L6.65 13.77L6.44 13.70L6.24 13.62L6.03 13.53L5.83 13.43L5.64 13.33L5.16 13.68L4.62 14.05L4.05 14.39L3.48 14.64L3.24 14.45L3.00 14.24L2.78 14.02L2.56 13.80L2.35 13.56L2.16 13.32L2.41 12.75L2.75 12.18L3.12 11.64L3.47 11.16L3.37 10.97L3.27 10.77L3.18 10.56L3.10 10.36L3.03 10.15L2.96 9.93L2.38 9.85L1.73 9.73L1.09 9.56L0.51 9.33L0.47 9.02L0.46 8.71L0.45 8.40L0.46 8.09L0.47 7.78L0.51 7.47L1.09 7.24L1.73 7.07L2.38 6.95L2.96 6.87L3.03 6.65L3.10 6.44L3.18 6.24L3.27 6.03L3.37 5.83L3.47 5.64L3.12 5.16L2.75 4.62L2.41 4.05L2.16 3.48L2.35 3.24L2.56 3.00L2.78 2.78L3.00 2.56L3.24 2.35L3.48 2.16L4.05 2.41L4.62 2.75L5.16 3.12L5.64 3.47L5.83 3.37L6.03 3.27L6.24 3.18L6.44 3.10L6.65 3.03L6.87 2.96L6.95 2.38L7.07 1.73L7.24 1.09L7.47 0.51L7.78 0.47L8.09 0.46Z" fill="none" stroke="#4c4c4c" stroke-width="1.050" stroke-linejoin="round"/><circle cx="8.400" cy="8.400" r="3.500" fill="none" stroke="#4c4c4c" stroke-width="1.050"/></svg>
<div class="t" style="left:857.00px;top:594.08px;font-size:13.3px;letter-spacing:0.094px;color:#252527;">Einstellung</div>
<svg style="left:959.75px;top:583.6899999999999px" width="40" height="36" viewBox="0 0 40 36" ><defs><radialGradient id="ng5" cx=".32" cy=".28" r=".8"><stop offset="0" stop-color="#5ee0ff"/><stop offset=".45" stop-color="#27a6f2"/><stop offset="1" stop-color="#1b7cda"/></radialGradient></defs><path d="M25.900 3.200Q28.100 .3 30.500 2.700C31 6.500 37.600 9 37.700 15C37.700 19 36.200 21 34.400 22.500C35 20 35.200 17.500 33 15.200C31 13 29 12.500 27.600 12L19.800 27.500 16.800 25z" fill="#2985de"/><ellipse cx="11.400" cy="26.600" rx="8.600" ry="7.200" transform="rotate(-22 11.400 26.600)" fill="url(#ng5)"/><rect x="2.600" y="5" width="35.300" height="12.400" rx="3.300" fill="#3971c6" stroke="#233a66" stroke-width="1.250"/><text x="20.900" y="14.850" text-anchor="middle" font-family="Liberation Sans,sans-serif" font-weight="bold" font-size="9.5" fill="#fff" stroke="#0b0e16" stroke-width="2.700" stroke-linejoin="round" paint-order="stroke" letter-spacing="0.3">MP3</text></svg>
<svg style="left:1029.3px;top:542.24px" width="17" height="17" viewBox="0 0 17 17" ><g transform="rotate(45 8.500 8.500)"><path d="M5 3.600h7v11.200L8.500 19.300 5 14.800z" fill="#fff" stroke="#6a6a6a" stroke-width=".95" stroke-linejoin="round"/><path d="M5 14.800Q6.700 13.600 8.500 14.800Q10.300 13.600 12 14.800M8.500 3.600v11.200" stroke="#6a6a6a" stroke-width=".8" fill="none"/><path d="M5 3.600V1.600Q5 .2 6.500 .2H10.500Q12 .2 12 1.600V3.600z" fill="#585858" stroke="#585858" stroke-width=".95" stroke-linejoin="round"/></g></svg>
<div id="bot"></div>
<svg style="left:9px;top:694.700px" width="21" height="22"><rect x=".7" y=".7" width="19.600" height="20.600" rx="2.500" fill="none" stroke="#a6a6a6" stroke-width="1.300"/><path d="M10.500 5V17M4.500 11H16.500" stroke="#a6a6a6" stroke-width="1.300"/></svg>
<svg style="left:41.700px;top:694.300px" width="15" height="22"><path d="M0 4H15M1.100 4V19.500Q1.100 21 2.600 21H12.400Q13.900 21 13.900 19.500V4M4.600 8V18M7.500 8V18M10.400 8V18" fill="none" stroke="#9a9a9a" stroke-width="1.200"/></svg>
<div class="t" style="left:76.40px;top:698.95px;font-size:14px;letter-spacing:-0.347px;color:#e4e4e4;">Konvertieren alle Tasks in</div>
<div style="position:absolute;left:231px;top:694.500px;width:187px;height:20.300px;border:1.200px solid #858585;border-radius:6px;background:#262626"></div>
<div class="t" style="left:238.00px;top:698.95px;font-size:14px;letter-spacing:-0.331px;color:#e4e4e4;">MP3 Gleich wie Quelle</div>
<div class="t" style="left:404.80px;top:703.98px;font-size:9px;color:#d8d8d8;">▾</div>
<div style="position:absolute;left:424.800px;top:699.800px;width:12.400px;height:12.400px"><svg style="left:0px;top:0px" width="12.4" height="12.4" viewBox="0 0 16 16" ><path d="M8.00 0.10L8.41 0.11L8.83 0.14L9.22 0.31L9.54 0.77L9.80 1.29L10.01 1.81L10.19 2.29L10.44 2.52L10.72 2.65L11.00 2.80L11.27 2.97L11.53 3.15L11.85 3.25L12.36 3.16L12.91 3.09L13.49 3.05L14.05 3.10L14.39 3.36L14.63 3.70L14.84 4.05L15.04 4.41L15.22 4.79L15.27 5.21L15.03 5.72L14.71 6.20L14.37 6.65L14.04 7.04L13.97 7.37L13.99 7.69L14.00 8.00L13.99 8.31L13.97 8.63L14.04 8.96L14.37 9.35L14.71 9.80L15.03 10.28L15.27 10.79L15.22 11.21L15.04 11.59L14.84 11.95L14.63 12.30L14.39 12.64L14.05 12.90L13.49 12.95L12.91 12.91L12.36 12.84L11.85 12.75L11.53 12.85L11.27 13.03L11.00 13.20L10.72 13.35L10.44 13.48L10.19 13.71L10.01 14.19L9.80 14.71L9.54 15.23L9.22 15.69L8.83 15.86L8.41 15.89L8.00 15.90L7.59 15.89L7.17 15.86L6.78 15.69L6.46 15.23L6.20 14.71L5.99 14.19L5.81 13.71L5.56 13.48L5.28 13.35L5.00 13.20L4.73 13.03L4.47 12.85L4.15 12.75L3.64 12.84L3.09 12.91L2.51 12.95L1.95 12.90L1.61 12.64L1.37 12.30L1.16 11.95L0.96 11.59L0.78 11.21L0.73 10.79L0.97 10.28L1.29 9.80L1.63 9.35L1.96 8.96L2.03 8.63L2.01 8.31L2.00 8.00L2.01 7.69L2.03 7.37L1.96 7.04L1.63 6.65L1.29 6.20L0.97 5.72L0.73 5.21L0.78 4.79L0.96 4.41L1.16 4.05L1.37 3.70L1.61 3.36L1.95 3.10L2.51 3.05L3.09 3.09L3.64 3.16L4.15 3.25L4.47 3.15L4.73 2.97L5.00 2.80L5.28 2.65L5.56 2.52L5.81 2.29L5.99 1.81L6.20 1.29L6.46 0.77L6.78 0.31L7.17 0.14L7.59 0.11Z M8 5.250a2.750 2.750 0 1 0 0 5.500a2.750 2.750 0 1 0 0-5.500Z" fill="#8e8e8e" fill-rule="evenodd"/></svg></div>
<div class="t" style="left:446.50px;top:698.95px;font-size:14px;letter-spacing:-0.242px;color:#e4e4e4;">Speichern auf</div>
<div style="position:absolute;left:535px;top:695.500px;width:278px;height:20px;border:1.300px solid #a2a2a2;border-radius:6px"></div>
<svg style="left:540px;top:698px" width="14" height="12"><path d="M0 1.500Q0 0 1.500 0H5L6.500 1.800H12.500Q14 1.800 14 3.300V10.500Q14 12 12.500 12H1.500Q0 12 0 10.500z" fill="#a9a9a9"/></svg>
<div class="t" style="left:558.00px;top:698.95px;font-size:14px;letter-spacing:-0.238px;color:#e4e4e4;">/Users/mac/Desktop</div>
<svg style="left:817.8px;top:698.6px" width="16.400" height="16.400" viewBox="0 0 16.400 16.400"><circle cx="8.200" cy="8.200" r="8.200" fill="#bdbdbd"/><path d="M3.900 8.200H12M8.700 4.700 12.200 8.200 8.700 11.700" fill="none" stroke="#222" stroke-width="1.300" stroke-linecap="round" stroke-linejoin="round"/></svg>
<div style="position:absolute;left:849.3px;top:701.400px;width:13px;height:13px;border-radius:3.200px;background:#fff"></div>
<div class="t" style="left:867.60px;top:701.40px;font-size:13px;letter-spacing:-0.197px;color:#f4f4f4;-webkit-text-stroke:.45px;">Zusammenfügen</div>
<div style="position:absolute;left:968.8px;top:694.800px;width:89.800px;height:25.800px;border-radius:13px;background:linear-gradient(90deg,#4a7ff8 0%,#7f6df7 35%,#c258f0 72%,#e846dc 100%)"></div>
<div class="t" style="left:978.20px;top:701.40px;font-size:13px;letter-spacing:-0.202px;color:#fbf4ff;-webkit-text-stroke:.45px;">Konvertieren</div>
<div style="position:absolute;right:0;top:0;width:4px;height:4px;background:radial-gradient(circle at 0 100%,rgba(255,255,255,0) 3.600px,#fff 4.400px)"></div>
<div style="position:absolute;right:0;bottom:0;width:3px;height:3px;background:radial-gradient(circle at 0 0,rgba(255,255,255,0) 2.600px,#fff 3.400px)"></div>
<div id="pop"><div id="popin">
<div style="position:absolute;left:0;top:0;width:100%;height:37px;background:#f6f6f6;border-bottom:1px solid #e9e9e9"></div>
<div class="tab" style="left:8.00px;width:96.30px;top:9.90px;height:27.30px"></div>
<div class="tab" style="left:104.30px;width:96.80px;top:9.90px;height:27.30px"></div>
<div class="tab on" style="left:201.10px;width:96.60px;top:9.90px;height:27.30px"></div>
<div class="tab" style="left:297.70px;width:96.60px;top:9.90px;height:27.30px"></div>
<div class="tab" style="left:394.30px;width:96.20px;top:9.90px;height:27.30px"></div>
<div class="tab" style="left:490.50px;width:96.00px;top:9.90px;height:27.30px"></div>
<div style="position:absolute;left:626px;top:8.200px;width:147px;height:20.600px;border-radius:5.500px;background:#fff;box-shadow:0 1px 2px rgba(0,0,0,.16),0 0 1px rgba(0,0,0,.12)"></div>
<div style="position:absolute;left:0;top:41.00px;width:237.60px;height:48.300px;background:#dcdcdc;border-radius:0 6px 6px 0"></div>
<div style="position:absolute;left:261.80px;top:41.00px;width:527.40px;height:48.300px;background:#dcdcdc;border-radius:6px"></div>
<div style="position:absolute;left:242.30px;top:38.20px;width:15.300px;height:420px;background:#fafafa;border-left:1px solid #e8e8e8;border-right:1px solid #e8e8e8"></div>
<div style="position:absolute;left:245.90px;top:39.60px;width:7.900px;height:181.800px;border-radius:4px;background:#c5c5c5"></div>
</div></div>
<svg style="left:2.6px;top:272.6px" width="19" height="19" viewBox="0 0 19 19" ><path d="M2.800 4.100A8.300 8.300 0 1 1 1.030 9.960" fill="none" stroke="#4b97cc" stroke-width="1.300" stroke-linecap="round"/><path d="M1.900 1 5 3.700 1.600 4.700z" fill="#4b97cc" stroke="#4b97cc" stroke-width=".6" stroke-linejoin="round"/><path d="M7.200 6.700 13.100 9.300 7.200 11.900z" fill="#3d9fe6" stroke="#3d9fe6" stroke-width=".7" stroke-linejoin="round"/></svg>
<div class="t lbl" style="left:33.80px;top:276.04px;font-size:12px;letter-spacing:0.173px;">Kürzlich</div>
<svg style="left:99.7px;top:272.2px" width="17.1" height="19.5" viewBox="0 0 17.1 19.5" ><rect x="0" y="0" width="17.100" height="19.500" rx="1.200" fill="#12181d"/><rect x="3.900" y="1.600" width="9.300" height="7.200" fill="#27a4ec"/><path d="M3.900 1.600H13.200L3.900 8.300z" fill="#56c6f5"/><rect x="3.900" y="10" width="9.300" height="8" fill="#1a9ae8"/><rect x="1.2" y="1.30" width="1.400" height="1.400" rx=".4" fill="#ececec"/><rect x="1.2" y="4.25" width="1.400" height="1.400" rx=".4" fill="#ececec"/><rect x="1.2" y="7.20" width="1.400" height="1.400" rx=".4" fill="#ececec"/><rect x="1.2" y="10.15" width="1.400" height="1.400" rx=".4" fill="#ececec"/><rect x="1.2" y="13.10" width="1.400" height="1.400" rx=".4" fill="#ececec"/><rect x="1.2" y="16.05" width="1.400" height="1.400" rx=".4" fill="#ececec"/><rect x="14.5" y="1.30" width="1.400" height="1.400" rx=".4" fill="#ececec"/><rect x="14.5" y="4.25" width="1.400" height="1.400" rx=".4" fill="#ececec"/><rect x="14.5" y="7.20" width="1.400" height="1.400" rx=".4" fill="#ececec"/><rect x="14.5" y="10.15" width="1.400" height="1.400" rx=".4" fill="#ececec"/><rect x="14.5" y="13.10" width="1.400" height="1.400" rx=".4" fill="#ececec"/><rect x="14.5" y="16.05" width="1.400" height="1.400" rx=".4" fill="#ececec"/></svg>
<div class="t lbl" style="left:136.30px;top:276.04px;font-size:12px;letter-spacing:0.379px;">Video</div>
<svg style="left:195.6px;top:272.4px" width="19" height="18" viewBox="0 0 19 18" ><defs><linearGradient id="ag" x1="0" y1="0" x2="1" y2="1"><stop offset="0" stop-color="#4cc8f8"/><stop offset=".6" stop-color="#229af0"/><stop offset="1" stop-color="#2380da"/></linearGradient></defs><ellipse cx="4.500" cy="13.900" rx="4.500" ry="3.300" transform="rotate(-20 4.500 13.900)" fill="url(#ag)"/><path d="M7.900 13.500 13.700 1.200Q14.100 .5 14.500 1.200Q15.300 4.500 17.300 7Q18.400 8.800 17.500 10.900" fill="none" stroke="#2d7fd2" stroke-width="2.100" stroke-linecap="round" stroke-linejoin="round"/></svg>
<div class="t lbl" style="left:233.20px;top:276.04px;font-size:12px;letter-spacing:0.074px;">Audio</div>
<svg style="left:294.7px;top:271.1px" width="13.2" height="21.2" viewBox="0 0 13.2 21.2" ><defs><linearGradient id="pg" x1="0" y1="0" x2="1" y2="1"><stop offset="0" stop-color="#2fb8f8"/><stop offset="1" stop-color="#16a0f0"/></linearGradient></defs><rect x=".6" y=".6" width="12" height="20" rx="2.300" fill="url(#pg)" stroke="#184a80" stroke-width="1.300"/><path d="M4.300 .6h4.600v.9q0 .8-.8.800H5.100q-.8 0-.8-.8z" fill="#184a80"/></svg>
<div class="t lbl" style="left:330.30px;top:276.04px;font-size:12px;letter-spacing:0.221px;">Gerät</div>
<svg style="left:389px;top:273.6px" width="18" height="16.2" viewBox="0 0 18 16.2" ><rect x=".7" y=".7" width="16.600" height="14.800" rx="1.300" fill="#e4f6fc" stroke="#4a93c8" stroke-width="1.350"/><rect x="1.400" y="1.400" width="15.200" height="2.500" fill="#a9e5fa"/><path d="M.7 4.300H17.300" stroke="#4a93c8" stroke-width="1.200"/><path d="M6.400 7.200 11.900 9.900 6.400 12.600z" fill="#2f9fe8" stroke="#2f9fe8" stroke-width=".7" stroke-linejoin="round"/></svg>
<div class="t lbl" style="left:411.20px;top:276.04px;font-size:12px;letter-spacing:0.320px;">Web-Video</div>
<svg style="left:486.4px;top:274px" width="16" height="16" viewBox="0 0 16 16" ><path d="M0 2.400H16M0 7.900H16M0 13.400H16" stroke="#2a2a2a" stroke-width="1.550"/><circle cx="5.400" cy="2.400" r="2.100" fill="#2fa6ea"/><circle cx="10.800" cy="7.900" r="2.100" fill="#2fa6ea"/><circle cx="5.400" cy="13.400" r="2.100" fill="#2fa6ea"/></svg>
<div class="t lbl" style="left:511.40px;top:276.04px;font-size:12px;letter-spacing:0.075px;">Anpassen</div>
<svg style="left:621px;top:270.7px" width="13" height="13" viewBox="0 0 13 13" ><circle cx="5.300" cy="5.100" r="4.200" fill="none" stroke="#262626" stroke-width="1.400"/><path d="M8.300 8.100 11.800 11.600" stroke="#262626" stroke-width="1.600" stroke-linecap="round"/></svg>
<div class="t" style="left:641.60px;top:270.70px;font-size:13px;letter-spacing:-0.194px;color:#b9b9b9;">Suche</div>
<div style="position:absolute;left:0;top:305.65px;width:60px;height:36.00px;overflow:hidden"><svg style="left:4.15px;top:0px" width="40" height="36" viewBox="0 0 40 36" ><defs><radialGradient id="ng6" cx=".32" cy=".28" r=".8"><stop offset="0" stop-color="#5ee0ff"/><stop offset=".45" stop-color="#27a6f2"/><stop offset="1" stop-color="#1b7cda"/></radialGradient></defs><path d="M25.900 3.200Q28.100 .3 30.500 2.700C31 6.500 37.600 9 37.700 15C37.700 19 36.200 21 34.400 22.500C35 20 35.200 17.500 33 15.200C31 13 29 12.500 27.600 12L19.800 27.500 16.800 25z" fill="#2985de"/><ellipse cx="11.400" cy="26.600" rx="8.600" ry="7.200" transform="rotate(-22 11.400 26.600)" fill="url(#ng6)"/><rect x="2.600" y="5" width="35.300" height="12.400" rx="3.300" fill="#3971c6" stroke="#233a66" stroke-width="1.250"/><text x="20.900" y="14.850" text-anchor="middle" font-family="Liberation Sans,sans-serif" font-weight="bold" font-size="9.5" fill="#fff" stroke="#0b0e16" stroke-width="2.700" stroke-linejoin="round" paint-order="stroke" letter-spacing="0.3">MP3</text></svg></div>
<div class="t lbl" style="left:51.40px;top:317.60px;font-size:13px;letter-spacing:-0.367px;">MP3</div>
<div style="position:absolute;left:0;top:362.30px;width:60px;height:36.00px;overflow:hidden"><svg style="left:4.15px;top:0px" width="40" height="36" viewBox="0 0 40 36" ><defs><radialGradient id="ng7" cx=".32" cy=".28" r=".8"><stop offset="0" stop-color="#5ee0ff"/><stop offset=".45" stop-color="#27a6f2"/><stop offset="1" stop-color="#1b7cda"/></radialGradient></defs><path d="M25.900 3.200Q28.100 .3 30.500 2.700C31 6.500 37.600 9 37.700 15C37.700 19 36.200 21 34.400 22.500C35 20 35.200 17.500 33 15.200C31 13 29 12.500 27.600 12L19.800 27.500 16.800 25z" fill="#2985de"/><ellipse cx="11.400" cy="26.600" rx="8.600" ry="7.200" transform="rotate(-22 11.400 26.600)" fill="url(#ng7)"/><rect x="2.600" y="5" width="35.300" height="12.400" rx="3.300" fill="#3971c6" stroke="#233a66" stroke-width="1.250"/><text x="20.900" y="14.850" text-anchor="middle" font-family="Liberation Sans,sans-serif" font-weight="bold" font-size="9.5" fill="#fff" stroke="#0b0e16" stroke-width="2.700" stroke-linejoin="round" paint-order="stroke" letter-spacing="0.3">WAV</text></svg></div>
<div class="t lbl" style="left:51.40px;top:374.25px;font-size:13px;letter-spacing:-0.686px;">WAV</div>
<div style="position:absolute;left:0;top:418.95px;width:60px;height:36.00px;overflow:hidden"><svg style="left:4.15px;top:0px" width="40" height="36" viewBox="0 0 40 36" ><defs><radialGradient id="ng8" cx=".32" cy=".28" r=".8"><stop offset="0" stop-color="#5ee0ff"/><stop offset=".45" stop-color="#27a6f2"/><stop offset="1" stop-color="#1b7cda"/></radialGradient></defs><path d="M25.900 3.200Q28.100 .3 30.500 2.700C31 6.500 37.600 9 37.700 15C37.700 19 36.200 21 34.400 22.500C35 20 35.200 17.500 33 15.200C31 13 29 12.500 27.600 12L19.800 27.500 16.800 25z" fill="#2985de"/><ellipse cx="11.400" cy="26.600" rx="8.600" ry="7.200" transform="rotate(-22 11.400 26.600)" fill="url(#ng8)"/><rect x="2.600" y="5" width="35.300" height="12.400" rx="3.300" fill="#3971c6" stroke="#233a66" stroke-width="1.250"/><text x="20.900" y="14.850" text-anchor="middle" font-family="Liberation Sans,sans-serif" font-weight="bold" font-size="9.5" fill="#fff" stroke="#0b0e16" stroke-width="2.700" stroke-linejoin="round" paint-order="stroke" letter-spacing="0.3">M4A</text></svg></div>
<div class="t lbl" style="left:51.40px;top:430.90px;font-size:13px;letter-spacing:0.333px;">M4A</div>
<div style="position:absolute;left:0;top:475.60px;width:60px;height:36.00px;overflow:hidden"><svg style="left:4.15px;top:0px" width="40" height="36" viewBox="0 0 40 36" ><defs><radialGradient id="ng9" cx=".32" cy=".28" r=".8"><stop offset="0" stop-color="#5ee0ff"/><stop offset=".45" stop-color="#27a6f2"/><stop offset="1" stop-color="#1b7cda"/></radialGradient></defs><path d="M25.900 3.200Q28.100 .3 30.500 2.700C31 6.500 37.600 9 37.700 15C37.700 19 36.200 21 34.400 22.500C35 20 35.200 17.500 33 15.200C31 13 29 12.500 27.600 12L19.800 27.500 16.800 25z" fill="#2985de"/><ellipse cx="11.400" cy="26.600" rx="8.600" ry="7.200" transform="rotate(-22 11.400 26.600)" fill="url(#ng9)"/><rect x="2.600" y="5" width="35.300" height="12.400" rx="3.300" fill="#3971c6" stroke="#233a66" stroke-width="1.250"/><text x="20.900" y="14.850" text-anchor="middle" font-family="Liberation Sans,sans-serif" font-weight="bold" font-size="9.5" fill="#fff" stroke="#0b0e16" stroke-width="2.700" stroke-linejoin="round" paint-order="stroke" letter-spacing="0.3">WMA</text></svg></div>
<div class="t lbl" style="left:51.40px;top:487.55px;font-size:13px;letter-spacing:-0.091px;">WMA</div>
<div style="position:absolute;left:0;top:532.25px;width:60px;height:36.00px;overflow:hidden"><svg style="left:4.15px;top:0px" width="40" height="36" viewBox="0 0 40 36" ><defs><radialGradient id="ng10" cx=".32" cy=".28" r=".8"><stop offset="0" stop-color="#5ee0ff"/><stop offset=".45" stop-color="#27a6f2"/><stop offset="1" stop-color="#1b7cda"/></radialGradient></defs><path d="M25.900 3.200Q28.100 .3 30.500 2.700C31 6.500 37.600 9 37.700 15C37.700 19 36.200 21 34.400 22.500C35 20 35.200 17.500 33 15.200C31 13 29 12.500 27.600 12L19.800 27.500 16.800 25z" fill="#2985de"/><ellipse cx="11.400" cy="26.600" rx="8.600" ry="7.200" transform="rotate(-22 11.400 26.600)" fill="url(#ng10)"/><rect x="2.600" y="5" width="35.300" height="12.400" rx="3.300" fill="#3971c6" stroke="#233a66" stroke-width="1.250"/><text x="20.900" y="14.850" text-anchor="middle" font-family="Liberation Sans,sans-serif" font-weight="bold" font-size="9.5" fill="#fff" stroke="#0b0e16" stroke-width="2.700" stroke-linejoin="round" paint-order="stroke" letter-spacing="0.3">AAC</text></svg></div>
<div class="t lbl" style="left:51.40px;top:544.20px;font-size:13px;letter-spacing:-0.567px;">AAC</div>
<div style="position:absolute;left:0;top:588.90px;width:60px;height:36.00px;overflow:hidden"><svg style="left:4.15px;top:0px" width="40" height="36" viewBox="0 0 40 36" ><defs><radialGradient id="ng11" cx=".32" cy=".28" r=".8"><stop offset="0" stop-color="#5ee0ff"/><stop offset=".45" stop-color="#27a6f2"/><stop offset="1" stop-color="#1b7cda"/></radialGradient></defs><path d="M25.900 3.200Q28.100 .3 30.500 2.700C31 6.500 37.600 9 37.700 15C37.700 19 36.200 21 34.400 22.500C35 20 35.200 17.500 33 15.200C31 13 29 12.500 27.600 12L19.800 27.500 16.800 25z" fill="#2985de"/><ellipse cx="11.400" cy="26.600" rx="8.600" ry="7.200" transform="rotate(-22 11.400 26.600)" fill="url(#ng11)"/><rect x="2.600" y="5" width="35.300" height="12.400" rx="3.300" fill="#3971c6" stroke="#233a66" stroke-width="1.250"/><text x="20.900" y="14.850" text-anchor="middle" font-family="Liberation Sans,sans-serif" font-weight="bold" font-size="8.7" fill="#fff" stroke="#0b0e16" stroke-width="2.700" stroke-linejoin="round" paint-order="stroke" letter-spacing="0.35">FLAC</text></svg></div>
<div class="t lbl" style="left:51.40px;top:600.85px;font-size:13px;letter-spacing:-0.745px;">FLAC</div>
<div style="position:absolute;left:0;top:645.55px;width:60px;height:36.00px;overflow:hidden"><svg style="left:4.15px;top:0px" width="40" height="36" viewBox="0 0 40 36" ><defs><radialGradient id="ng12" cx=".32" cy=".28" r=".8"><stop offset="0" stop-color="#5ee0ff"/><stop offset=".45" stop-color="#27a6f2"/><stop offset="1" stop-color="#1b7cda"/></radialGradient></defs><path d="M25.900 3.200Q28.100 .3 30.500 2.700C31 6.500 37.600 9 37.700 15C37.700 19 36.200 21 34.400 22.500C35 20 35.200 17.500 33 15.200C31 13 29 12.500 27.600 12L19.800 27.500 16.800 25z" fill="#2985de"/><ellipse cx="11.400" cy="26.600" rx="8.600" ry="7.200" transform="rotate(-22 11.400 26.600)" fill="url(#ng12)"/><rect x="2.600" y="5" width="35.300" height="12.400" rx="3.300" fill="#3971c6" stroke="#233a66" stroke-width="1.250"/><text x="20.900" y="14.850" text-anchor="middle" font-family="Liberation Sans,sans-serif" font-weight="bold" font-size="9.5" fill="#fff" stroke="#0b0e16" stroke-width="2.700" stroke-linejoin="round" paint-order="stroke" letter-spacing="0.3">AC3</text></svg></div>
<div class="t lbl" style="left:51.40px;top:657.50px;font-size:13px;letter-spacing:-0.498px;">AC3</div>
<div style="position:absolute;left:0;top:703.00px;width:60px;height:2.80px;overflow:hidden"><svg style="left:4.15px;top:0px" width="40" height="36" viewBox="0 0 40 36" ><defs><radialGradient id="ng13" cx=".32" cy=".28" r=".8"><stop offset="0" stop-color="#5ee0ff"/><stop offset=".45" stop-color="#27a6f2"/><stop offset="1" stop-color="#1b7cda"/></radialGradient></defs><path d="M25.900 3.200Q28.100 .3 30.500 2.700C31 6.500 37.600 9 37.700 15C37.700 19 36.200 21 34.400 22.500C35 20 35.200 17.500 33 15.200C31 13 29 12.500 27.600 12L19.800 27.500 16.800 25z" fill="#2985de"/><ellipse cx="11.400" cy="26.600" rx="8.600" ry="7.200" transform="rotate(-22 11.400 26.600)" fill="url(#ng13)"/><rect x="2.600" y="5" width="35.300" height="12.400" rx="3.300" fill="#3971c6" stroke="#233a66" stroke-width="1.250"/><text x="20.900" y="14.850" text-anchor="middle" font-family="Liberation Sans,sans-serif" font-weight="bold" font-size="9.5" fill="#fff" stroke="#0b0e16" stroke-width="2.700" stroke-linejoin="round" paint-order="stroke" letter-spacing="0.3"></text></svg></div>
<svg style="left:264.35px;top:305.55px" width="40" height="36" viewBox="0 0 40 36" ><defs><radialGradient id="ng14" cx=".32" cy=".28" r=".8"><stop offset="0" stop-color="#5ee0ff"/><stop offset=".45" stop-color="#27a6f2"/><stop offset="1" stop-color="#1b7cda"/></radialGradient></defs><path d="M25.900 3.200Q28.100 .3 30.500 2.700C31 6.500 37.600 9 37.700 15C37.700 19 36.200 21 34.400 22.500C35 20 35.200 17.500 33 15.200C31 13 29 12.500 27.600 12L19.800 27.500 16.800 25z" fill="#2985de"/><ellipse cx="11.400" cy="26.600" rx="8.600" ry="7.200" transform="rotate(-22 11.400 26.600)" fill="url(#ng14)"/><rect x="2.600" y="5" width="35.300" height="12.400" rx="3.300" fill="#3971c6" stroke="#233a66" stroke-width="1.250"/><text x="20.900" y="14.850" text-anchor="middle" font-family="Liberation Sans,sans-serif" font-weight="bold" font-size="9.5" fill="#fff" stroke="#0b0e16" stroke-width="2.700" stroke-linejoin="round" paint-order="stroke" letter-spacing="0.3">MP3</text></svg>
<div class="t lbl" style="left:311.10px;top:317.70px;font-size:13px;letter-spacing:0.090px;">Gleich wie Quelle</div>
<div class="t lbl" style="left:529.90px;top:317.70px;font-size:13px;letter-spacing:0.325px;">Automatisch</div>
<svg style="left:264.35px;top:362.2px" width="40" height="36" viewBox="0 0 40 36" ><defs><radialGradient id="ng15" cx=".32" cy=".28" r=".8"><stop offset="0" stop-color="#5ee0ff"/><stop offset=".45" stop-color="#27a6f2"/><stop offset="1" stop-color="#1b7cda"/></radialGradient></defs><path d="M25.900 3.200Q28.100 .3 30.500 2.700C31 6.500 37.600 9 37.700 15C37.700 19 36.200 21 34.400 22.500C35 20 35.200 17.500 33 15.200C31 13 29 12.500 27.600 12L19.800 27.500 16.800 25z" fill="#2985de"/><ellipse cx="11.400" cy="26.600" rx="8.600" ry="7.200" transform="rotate(-22 11.400 26.600)" fill="url(#ng15)"/><rect x="2.600" y="5" width="35.300" height="12.400" rx="3.300" fill="#3971c6" stroke="#233a66" stroke-width="1.250"/><text x="20.900" y="14.850" text-anchor="middle" font-family="Liberation Sans,sans-serif" font-weight="bold" font-size="9.5" fill="#fff" stroke="#0b0e16" stroke-width="2.700" stroke-linejoin="round" paint-order="stroke" letter-spacing="0.3">MP3</text></svg>
<div class="t lbl" style="left:311.10px;top:374.35px;font-size:13px;letter-spacing:0.200px;">Hohe Qualität</div>
<div class="t lbl" style="left:529.90px;top:374.35px;font-size:13px;letter-spacing:0.593px;">224-320 kbps</div>
<svg style="left:264.35px;top:418.85px" width="40" height="36" viewBox="0 0 40 36" ><defs><radialGradient id="ng16" cx=".32" cy=".28" r=".8"><stop offset="0" stop-color="#5ee0ff"/><stop offset=".45" stop-color="#27a6f2"/><stop offset="1" stop-color="#1b7cda"/></radialGradient></defs><path d="M25.900 3.200Q28.100 .3 30.500 2.700C31 6.500 37.600 9 37.700 15C37.700 19 36.200 21 34.400 22.500C35 20 35.200 17.500 33 15.200C31 13 29 12.500 27.600 12L19.800 27.500 16.800 25z" fill="#2985de"/><ellipse cx="11.400" cy="26.600" rx="8.600" ry="7.200" transform="rotate(-22 11.400 26.600)" fill="url(#ng16)"/><rect x="2.600" y="5" width="35.300" height="12.400" rx="3.300" fill="#3971c6" stroke="#233a66" stroke-width="1.250"/><text x="20.900" y="14.850" text-anchor="middle" font-family="Liberation Sans,sans-serif" font-weight="bold" font-size="9.5" fill="#fff" stroke="#0b0e16" stroke-width="2.700" stroke-linejoin="round" paint-order="stroke" letter-spacing="0.3">MP3</text></svg>
<div class="t lbl" style="left:311.10px;top:431.00px;font-size:13px;letter-spacing:0.285px;">Mittlere Qualität</div>
<div class="t lbl" style="left:529.90px;top:431.00px;font-size:13px;letter-spacing:0.447px;">192-224 kbps</div>
<svg style="left:264.35px;top:475.5px" width="40" height="36" viewBox="0 0 40 36" ><defs><radialGradient id="ng17" cx=".32" cy=".28" r=".8"><stop offset="0" stop-color="#5ee0ff"/><stop offset=".45" stop-color="#27a6f2"/><stop offset="1" stop-color="#1b7cda"/></radialGradient></defs><path d="M25.900 3.200Q28.100 .3 30.500 2.700C31 6.500 37.600 9 37.700 15C37.700 19 36.200 21 34.400 22.500C35 20 35.200 17.500 33 15.200C31 13 29 12.500 27.600 12L19.800 27.500 16.800 25z" fill="#2985de"/><ellipse cx="11.400" cy="26.600" rx="8.600" ry="7.200" transform="rotate(-22 11.400 26.600)" fill="url(#ng17)"/><rect x="2.600" y="5" width="35.300" height="12.400" rx="3.300" fill="#3971c6" stroke="#233a66" stroke-width="1.250"/><text x="20.900" y="14.850" text-anchor="middle" font-family="Liberation Sans,sans-serif" font-weight="bold" font-size="9.5" fill="#fff" stroke="#0b0e16" stroke-width="2.700" stroke-linejoin="round" paint-order="stroke" letter-spacing="0.3">MP3</text></svg>
<div class="t lbl" style="left:311.10px;top:487.65px;font-size:13px;letter-spacing:0.162px;">Geringe Qualität</div>
<div class="t lbl" style="left:529.90px;top:487.65px;font-size:13px;letter-spacing:0.414px;">32-192 kbps</div>
<svg style="left:743px;top:315.7px" width="16" height="16" viewBox="0 0 16 16" ><path d="M8.00 0.10L8.41 0.11L8.83 0.14L9.22 0.31L9.54 0.77L9.80 1.29L10.01 1.81L10.19 2.29L10.44 2.52L10.72 2.65L11.00 2.80L11.27 2.97L11.53 3.15L11.85 3.25L12.36 3.16L12.91 3.09L13.49 3.05L14.05 3.10L14.39 3.36L14.63 3.70L14.84 4.05L15.04 4.41L15.22 4.79L15.27 5.21L15.03 5.72L14.71 6.20L14.37 6.65L14.04 7.04L13.97 7.37L13.99 7.69L14.00 8.00L13.99 8.31L13.97 8.63L14.04 8.96L14.37 9.35L14.71 9.80L15.03 10.28L15.27 10.79L15.22 11.21L15.04 11.59L14.84 11.95L14.63 12.30L14.39 12.64L14.05 12.90L13.49 12.95L12.91 12.91L12.36 12.84L11.85 12.75L11.53 12.85L11.27 13.03L11.00 13.20L10.72 13.35L10.44 13.48L10.19 13.71L10.01 14.19L9.80 14.71L9.54 15.23L9.22 15.69L8.83 15.86L8.41 15.89L8.00 15.90L7.59 15.89L7.17 15.86L6.78 15.69L6.46 15.23L6.20 14.71L5.99 14.19L5.81 13.71L5.56 13.48L5.28 13.35L5.00 13.20L4.73 13.03L4.47 12.85L4.15 12.75L3.64 12.84L3.09 12.91L2.51 12.95L1.95 12.90L1.61 12.64L1.37 12.30L1.16 11.95L0.96 11.59L0.78 11.21L0.73 10.79L0.97 10.28L1.29 9.80L1.63 9.35L1.96 8.96L2.03 8.63L2.01 8.31L2.00 8.00L2.01 7.69L2.03 7.37L1.96 7.04L1.63 6.65L1.29 6.20L0.97 5.72L0.73 5.21L0.78 4.79L0.96 4.41L1.16 4.05L1.37 3.70L1.61 3.36L1.95 3.10L2.51 3.05L3.09 3.09L3.64 3.16L4.15 3.25L4.47 3.15L4.73 2.97L5.00 2.80L5.28 2.65L5.56 2.52L5.81 2.29L5.99 1.81L6.20 1.29L6.46 0.77L6.78 0.31L7.17 0.14L7.59 0.11Z M8 5.250a2.750 2.750 0 1 0 0 5.500a2.750 2.750 0 1 0 0-5.500Z" fill="#333" fill-rule="evenodd"/></svg>
</div>
</body>
</html>
